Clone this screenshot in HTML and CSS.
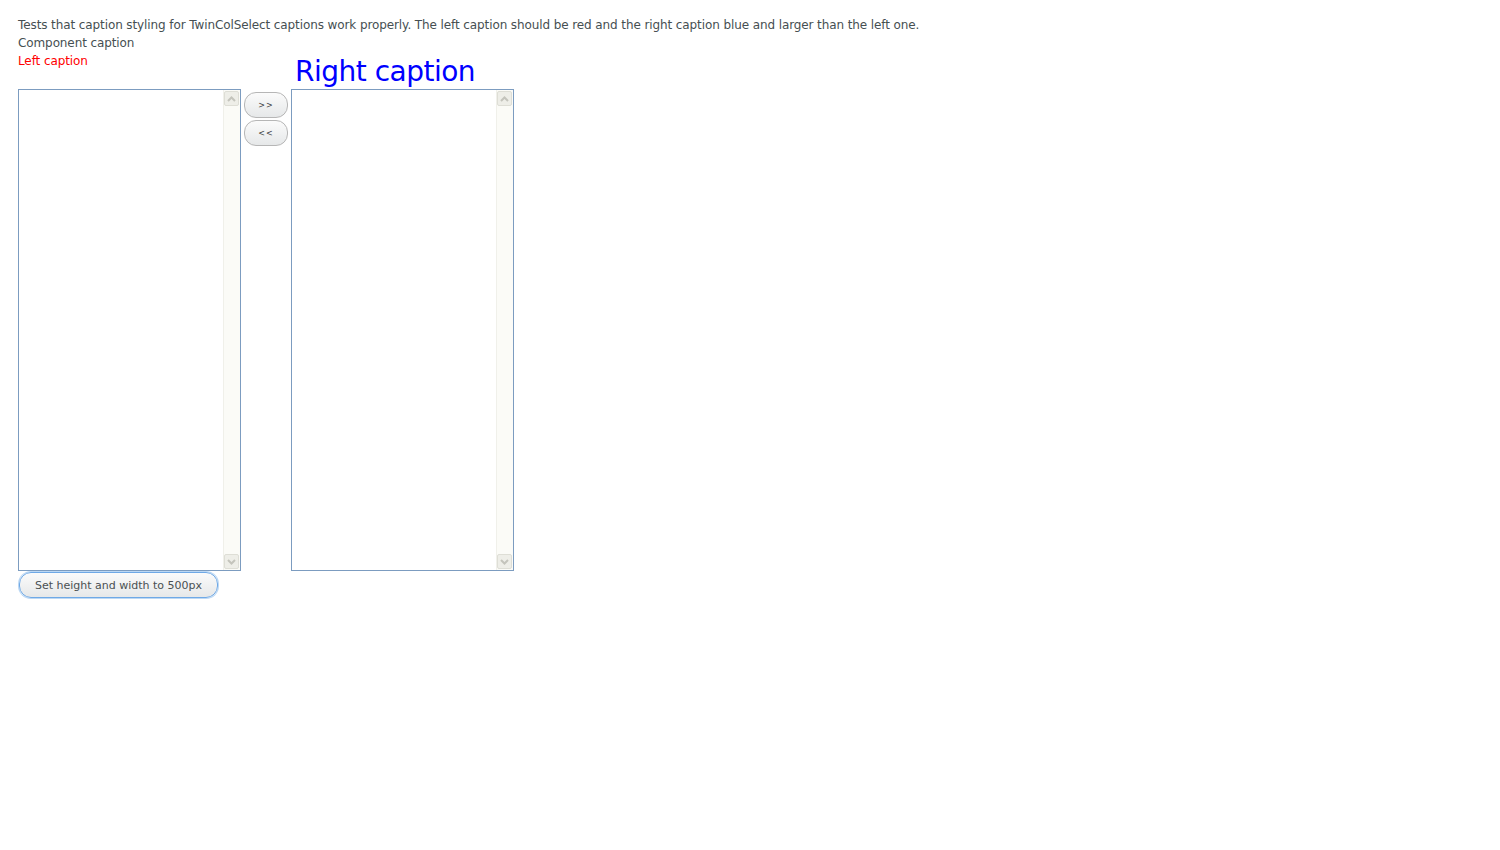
FILE: index.html
```html
<!DOCTYPE html>
<html>
<head>
<meta charset="utf-8">
<link rel="stylesheet" href="styles.css">
</head>
<body>
<div class="page">
  <div class="desc">Tests that caption styling for TwinColSelect captions work properly. The left caption should be red and the right caption blue and larger than the left one.</div>
  <div class="comp-caption">Component caption</div>
  <div class="twincol">
    <div class="cap-left">Left caption</div>
    <div></div>
    <div class="cap-right">Right caption</div>
    <div class="list">
      <div class="list-body"></div>
      <div class="scrollbar">
        <div class="sb-btn"><svg width="9" height="6" viewBox="0 0 9 6"><path d="M1 5 L4.5 1.5 L8 5" fill="none" stroke="#c4c4bc" stroke-width="2"/></svg></div>
        <div class="sb-track"></div>
        <div class="sb-btn"><svg width="9" height="6" viewBox="0 0 9 6"><path d="M1 1 L4.5 4.5 L8 1" fill="none" stroke="#c4c4bc" stroke-width="2"/></svg></div>
      </div>
    </div>
    <div class="buttons">
      <button class="btn small">&gt;&gt;</button>
      <button class="btn small">&lt;&lt;</button>
    </div>
    <div class="list">
      <div class="list-body"></div>
      <div class="scrollbar">
        <div class="sb-btn"><svg width="9" height="6" viewBox="0 0 9 6"><path d="M1 5 L4.5 1.5 L8 5" fill="none" stroke="#c4c4bc" stroke-width="2"/></svg></div>
        <div class="sb-track"></div>
        <div class="sb-btn"><svg width="9" height="6" viewBox="0 0 9 6"><path d="M1 1 L4.5 4.5 L8 1" fill="none" stroke="#c4c4bc" stroke-width="2"/></svg></div>
      </div>
    </div>
  </div>
  <button class="btn big">Set height and width to 500px</button>
</div>
</body>
</html>
```
FILE: styles.css
```css
html, body {
  margin: 0;
  padding: 0;
  background: #fff;
}
body {
  font-family: "DejaVu Sans", sans-serif;
  font-size: 12px;
  color: #464f52;
}
.page {
  padding: 16px 18px;
}
.desc, .comp-caption {
  height: 18px;
  line-height: 18px;
  font-size: 12px;
  letter-spacing: -0.1px;
}
.twincol {
  display: grid;
  grid-template-columns: 223px 50px 223px;
  grid-template-rows: 37px 482px;
}
.cap-left {
  color: #ff0000;
  height: 18px;
  line-height: 18px;
  align-self: start;
  letter-spacing: -0.1px;
}
.cap-right {
  color: #0000ff;
  font-size: 28px;
  line-height: 32px;
  height: 32px;
  padding-left: 4px;
  letter-spacing: -0.5px;
  align-self: end;
  margin-bottom: 1px;
}
.list {
  box-sizing: border-box;
  height: 482px;
  width: 223px;
  border: 1px solid #7c9cc0;
  display: flex;
  background: #fff;
}
.list-body {
  flex: 1;
}
.scrollbar {
  width: 16px;
  display: flex;
  flex-direction: column;
  background: #fbfbf7;
  border-left: 1px solid #f0f0ea;
  padding: 1px 0;
}
.sb-btn {
  box-sizing: border-box;
  height: 15px;
  width: 15px;
  margin: 0 1px 0 0;
  border: 1px solid #deded6;
  border-radius: 2px;
  background: #eeeee8;
  display: flex;
  align-items: center;
  justify-content: center;
}
.sb-track {
  flex: 1;
}
.buttons {
  display: flex;
  flex-direction: column;
  padding: 3px 0 0 3px;
  gap: 2px;
}
.btn {
  font-family: "DejaVu Sans", sans-serif;
  color: #3c4042;
  background: linear-gradient(#fbfbfb, #e6e8e9);
  border: 1px solid #b6b6b6;
  border-radius: 12px;
  cursor: pointer;
  padding: 0;
}
.btn.small {
  width: 44px;
  height: 26px;
  font-size: 8px;
  letter-spacing: 1px;
}
.btn.big {
  display: block;
  margin-top: 1px;
  margin-left: 1px;
  width: 199px;
  height: 26px;
  font-size: 11px;
  color: #4a5052;
  border-color: #6fa9e6;
  box-shadow: 0 0 0 1px #bcd8f4;
}
```
